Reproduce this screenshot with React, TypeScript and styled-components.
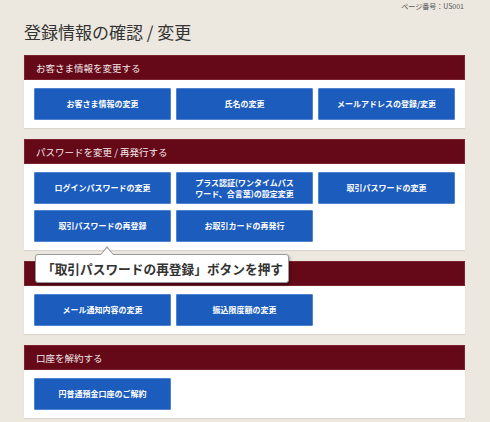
import React from "react";
import styled, { createGlobalStyle } from "styled-components";

const GlobalStyle = createGlobalStyle`
  html, body {
    margin: 0;
    padding: 0;
    background: #ece8df;
    font-family: "Noto Sans CJK JP", "Noto Sans", sans-serif;
    color: #333;
  }
`;

const Page = styled.div`
  width: 490px;
  height: 422px;
  overflow: hidden;
  box-sizing: border-box;
  padding: 0 25px 0 24px;
`;

const PageNo = styled.div`
  text-align: right;
  font-size: 7px;
  line-height: 12px;
  color: #555;
  padding-right: 1px;
`;

const Title = styled.h1`
  margin: 8px 0 11px;
  font-size: 17px;
  line-height: 24px;
  font-weight: 400;
  color: #333;
`;

const Panel = styled.section`
  background: #fff;
  margin-bottom: 11px;
  box-shadow: 0 1px 1px rgba(0, 0, 0, 0.08);
`;

const PanelHeader = styled.h2`
  margin: 0;
  height: 25px;
  display: flex;
  align-items: center;
  padding-left: 11px;
  background: #650818;
  border: 1px solid #7a2430;
  box-sizing: border-box;
  color: #f3eaea;
  font-size: 9.5px;
  font-weight: 400;
`;

const ButtonGrid = styled.div`
  display: grid;
  grid-template-columns: repeat(3, 137px);
  column-gap: 5px;
  row-gap: 6px;
  padding: 8px 10px 8px 10px;
`;

const Slot = styled.div`
  position: relative;
`;

const ActionButton = styled.button`
  width: 100%;
  height: 32px;
  box-sizing: border-box;
  border: 1px solid #4f82cf;
  border-radius: 1px;
  background: #1c5cbd;
  color: #fff;
  font-family: inherit;
  font-size: 8px;
  font-weight: 700;
  line-height: 11.5px;
  padding: 0 4px;
  cursor: pointer;
`;

const Callout = styled.div`
  position: absolute;
  left: 1px;
  top: 44px;
  z-index: 5;
  width: 254px;
  height: 29px;
  box-sizing: border-box;
  background: #fff;
  border: 1px solid #9a9a9a;
  border-radius: 3px;
  box-shadow: 1px 2px 3px rgba(0, 0, 0, 0.35);
  display: flex;
  align-items: center;
  padding-left: 6px;
  font-size: 12.7px;
  font-weight: 700;
  color: #333;
  white-space: nowrap;

  &::before,
  &::after {
    content: "";
    position: absolute;
    left: 64px;
    width: 0;
    height: 0;
    border-left: 7px solid transparent;
    border-right: 7px solid transparent;
  }
  &::before {
    top: -9px;
    border-bottom: 9px solid #9a9a9a;
  }
  &::after {
    top: -7px;
    border-bottom: 8px solid #fff;
  }
`;

type Item = { label: React.ReactNode; callout?: string };

// the third header's title is covered by the callout in the screen, so it is left blank
const sections: { title: string; items: Item[] }[] = [
  {
    title: "お客さま情報を変更する",
    items: [
      { label: "お客さま情報の変更" },
      { label: "氏名の変更" },
      { label: "メールアドレスの登録/変更" },
    ],
  },
  {
    title: "パスワードを変更 / 再発行する",
    items: [
      { label: "ログインパスワードの変更" },
      {
        label: (
          <>
            プラス認証(ワンタイムパス
            <br />
            ワード、合言葉)の設定変更
          </>
        ),
      },
      { label: "取引パスワードの変更" },
      { label: "取引パスワードの再登録", callout: "「取引パスワードの再登録」ボタンを押す" },
      { label: "お取引カードの再発行" },
    ],
  },
  {
    title: "",
    items: [{ label: "メール通知内容の変更" }, { label: "振込限度額の変更" }],
  },
  {
    title: "口座を解約する",
    items: [{ label: "円普通預金口座のご解約" }],
  },
];

export default function App() {
  return (
    <>
      <GlobalStyle />
      <Page>
        <PageNo>ページ番号：US001</PageNo>
        <Title>登録情報の確認 / 変更</Title>
        {sections.map((s, n) => (
          <Panel key={n}>
            <PanelHeader>{s.title}</PanelHeader>
            <ButtonGrid>
              {s.items.map((it, i) => (
                <Slot key={i}>
                  <ActionButton>{it.label}</ActionButton>
                  {it.callout && <Callout>{it.callout}</Callout>}
                </Slot>
              ))}
            </ButtonGrid>
          </Panel>
        ))}
      </Page>
    </>
  );
}
